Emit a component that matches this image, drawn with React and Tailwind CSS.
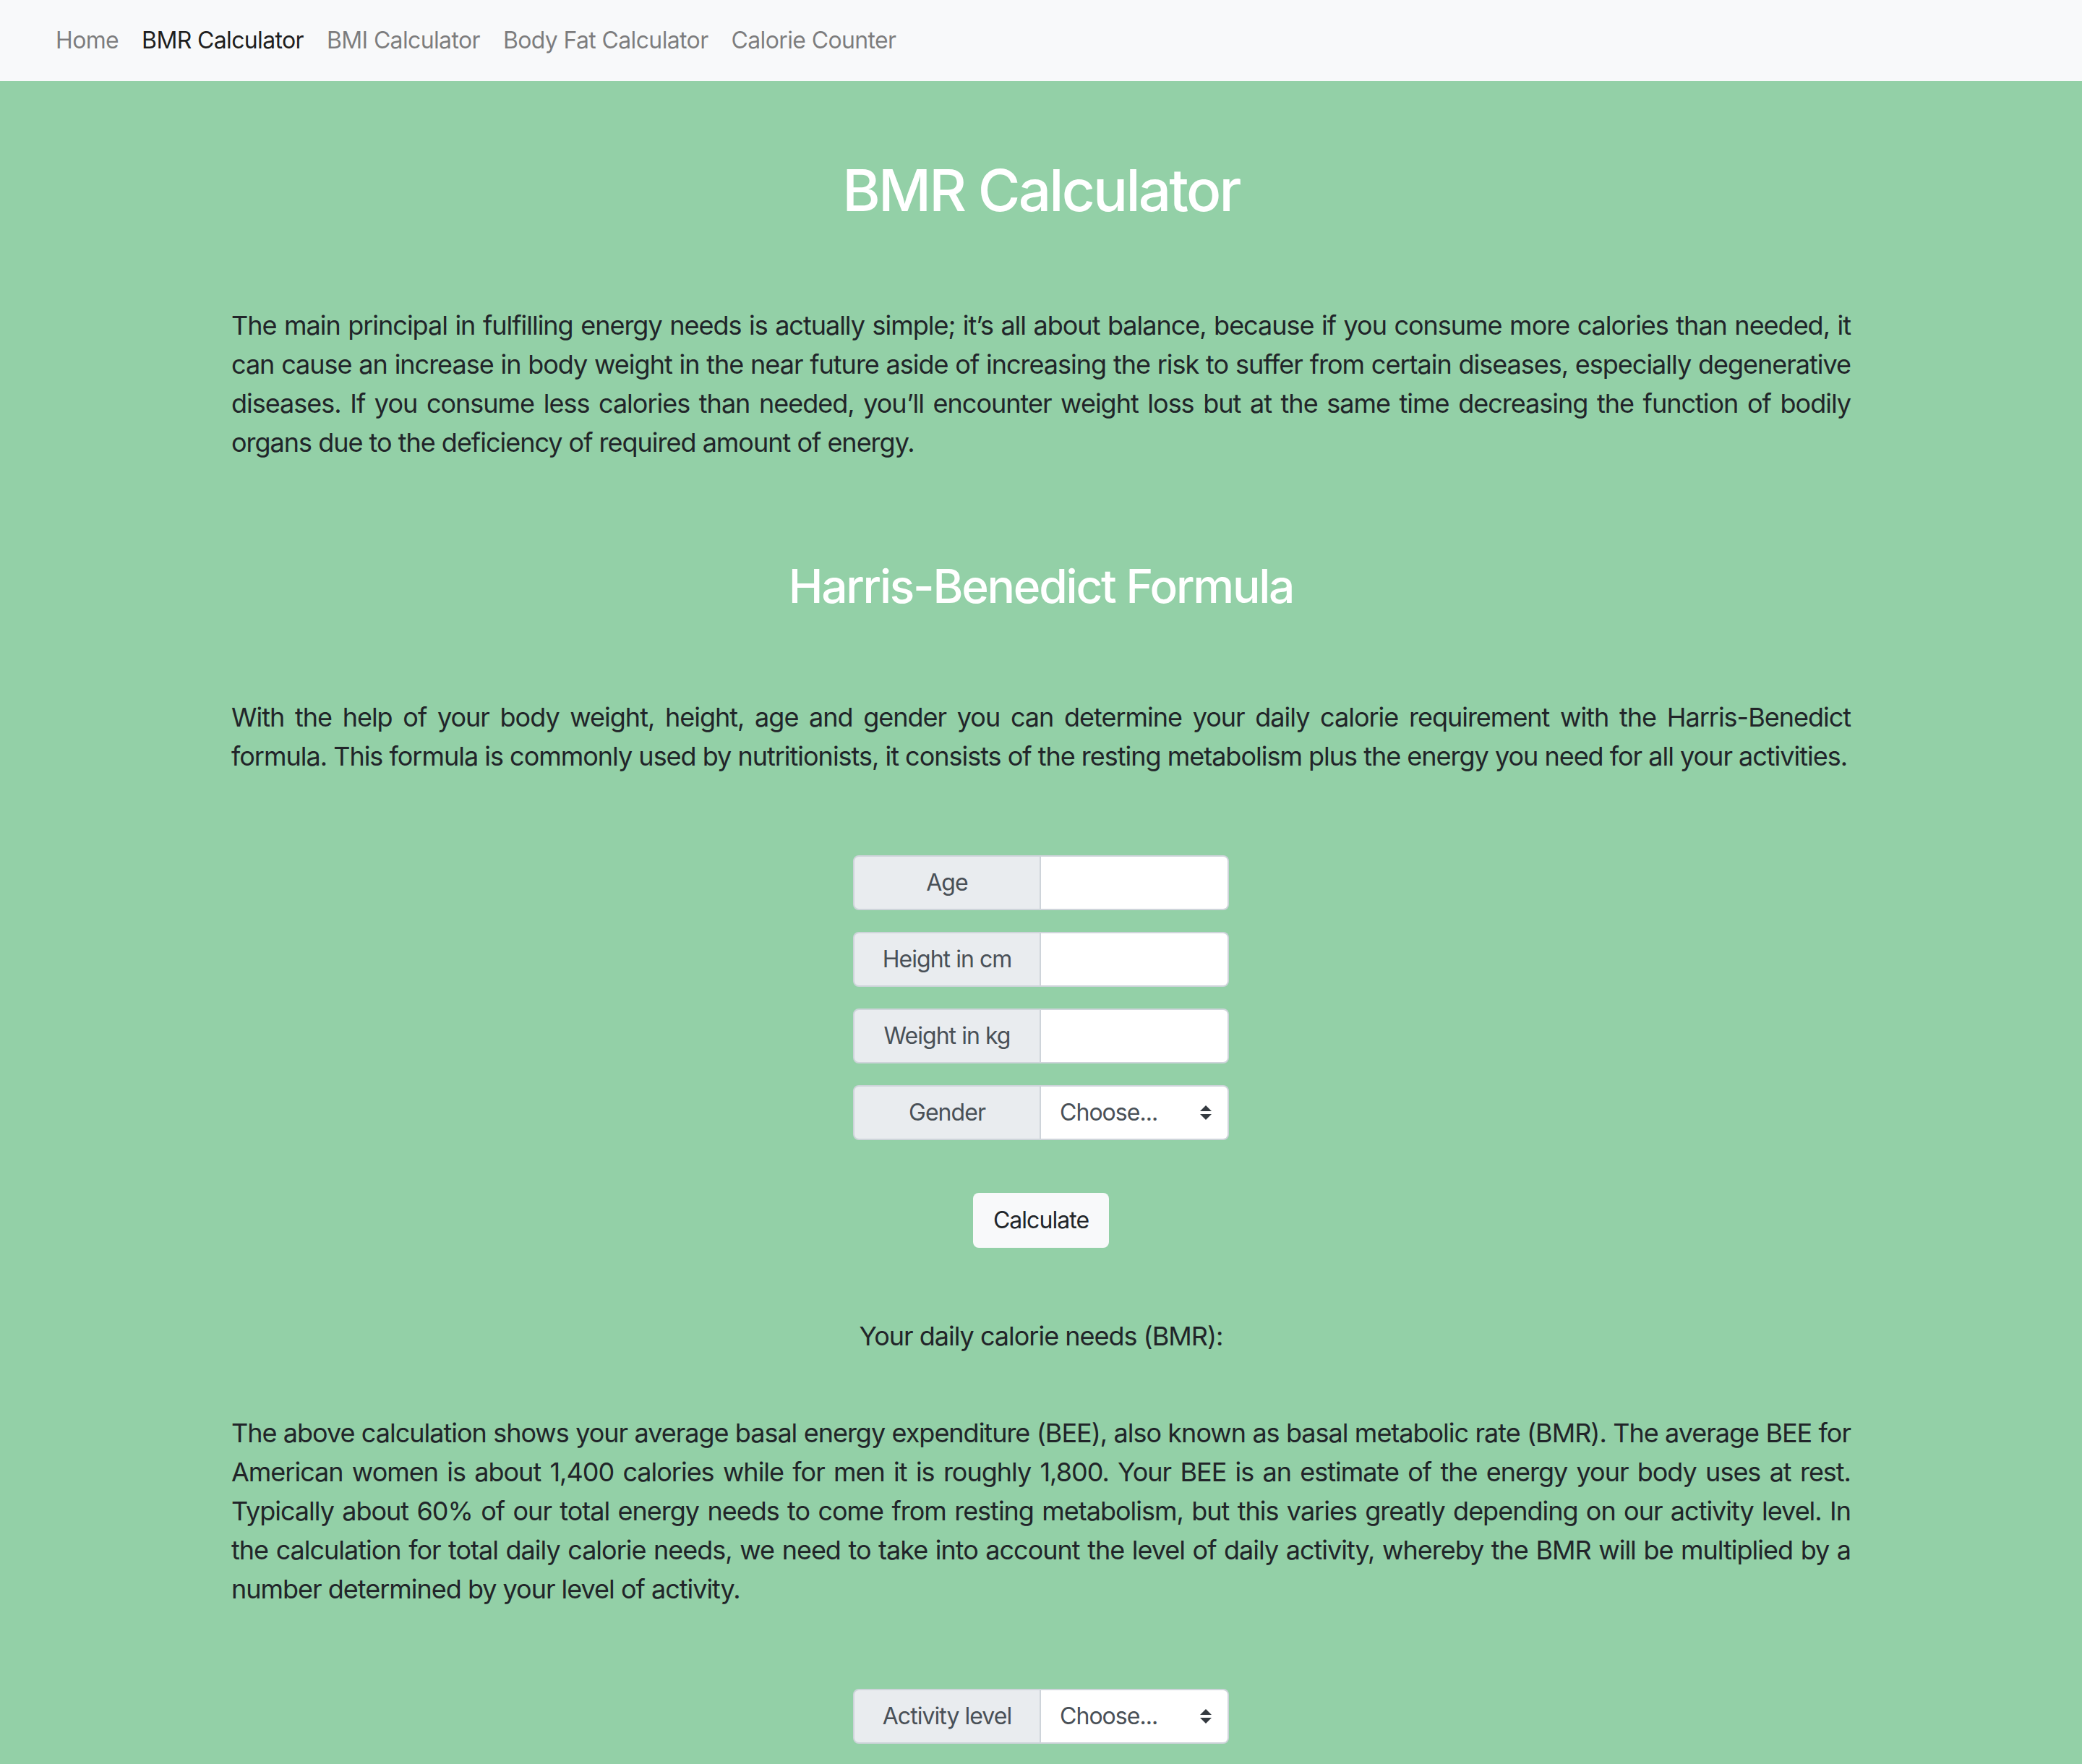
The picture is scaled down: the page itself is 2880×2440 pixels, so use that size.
import React from "react";

const FONT = { fontFamily: 'Inter, "Noto Sans", "Liberation Sans", sans-serif' };

function Arrow() {
  return (
    <svg
      className="pointer-events-none absolute right-[24px] top-1/2 -translate-y-1/2"
      width="16"
      height="20"
      viewBox="0 0 4 5"
    >
      <path fill="#343a40" d="M2 0L0 2h4zm0 5L0 3h4z" />
    </svg>
  );
}

function InputRow({ label, select }) {
  return (
    <div className="flex w-[520px] h-[76px] mx-auto">
      <div className="w-[260px] h-full flex items-center justify-center bg-[#e9ecef] border-2 border-[#ced4da] rounded-l-[8px] text-[32px] tracking-[-0.03em] text-[#495057]">
        {label}
      </div>
      {select ? (
        <div className="relative w-[260px] h-full">
          <select
            className="w-full h-full appearance-none bg-white border-2 border-l-0 border-[#ced4da] rounded-r-[8px] pl-[26px] text-[32px] tracking-[-0.03em] text-[#495057] outline-none"
            style={FONT}
            defaultValue=""
          >
            <option value="">Choose...</option>
          </select>
          <Arrow />
        </div>
      ) : (
        <input
          type="text"
          className="w-[260px] h-full bg-white border-2 border-l-0 border-[#ced4da] rounded-r-[8px] px-[24px] text-[32px] text-[#495057] outline-none"
          style={FONT}
        />
      )}
    </div>
  );
}

export default function App() {
  const links = [
    ["Home", false],
    ["BMR Calculator", true],
    ["BMI Calculator", false],
    ["Body Fat Calculator", false],
    ["Calorie Counter", false],
  ];
  return (
    <div style={FONT} className="min-h-[2440px] bg-[#93d0a7]">
      <nav className="h-[112px] bg-[#f8f9fa] flex items-center pl-[61px]">
        {links.map(([t, active]) => (
          <a
            key={t}
            className={
              active
                ? "px-[16px] text-[32px] tracking-[-0.02em] text-[rgba(0,0,0,0.9)]"
                : "px-[16px] text-[32px] tracking-[-0.02em] text-[rgba(0,0,0,0.5)]"
            }
          >
            {t}
          </a>
        ))}
      </nav>

      <main className="w-[2240px] mx-auto pb-[28px]">
        <h1 className="mt-[103px] text-center text-white text-[80px] leading-[96px] font-medium tracking-[-0.035em]">
          BMR Calculator
        </h1>

        <p className="mt-[112px] text-[36px] leading-[54px] tracking-[-0.028em] text-[#212529] text-justify">
          The main principal in fulfilling energy needs is actually simple; it’s all about balance, because if you
          consume more calories than needed, it can cause an increase in body weight in the near future aside of
          increasing the risk to suffer from certain diseases, especially degenerative diseases. If you consume less
          calories than needed, you’ll encounter weight loss but at the same time decreasing the function of bodily
          organs due to the deficiency of required amount of energy.
        </p>

        <h2 className="mt-[133px] text-center text-white text-[64px] leading-[77px] font-medium tracking-[-0.035em]">
          Harris-Benedict Formula
        </h2>

        <p className="mt-[116px] text-[36px] leading-[54px] tracking-[-0.028em] text-[#212529] text-justify">
          With the help of your body weight, height, age and gender you can determine your daily calorie requirement
          with the Harris-Benedict formula. This formula is commonly used by nutritionists, it consists of the resting
          metabolism plus the energy you need for all your activities.
        </p>

        <div className="mt-[110px] flex flex-col gap-[30px]">
          <InputRow label="Age" />
          <InputRow label="Height in cm" />
          <InputRow label="Weight in kg" />
          <InputRow label="Gender" select />
        </div>

        <div className="mt-[73px] flex justify-center">
          <button
            className="w-[188px] h-[76px] bg-[#f8f9fa] rounded-[8px] text-[32px] tracking-[-0.03em] text-[#212529]"
            style={FONT}
          >
            Calculate
          </button>
        </div>

        <p className="mt-[95px] text-center text-[36px] leading-[54px] tracking-[-0.028em] text-[#212529]">
          Your daily calorie needs (BMR):
        </p>

        <p className="mt-[80px] text-[36px] leading-[54px] tracking-[-0.028em] text-[#212529] text-justify">
          The above calculation shows your average basal energy expenditure (BEE), also known as basal metabolic rate
          (BMR). The average BEE for American women is about 1,400 calories while for men it is roughly 1,800. Your
          BEE is an estimate of the energy your body uses at rest. Typically about 60% of our total energy needs to
          come from resting metabolism, but this varies greatly depending on our activity level. In the calculation
          for total daily calorie needs, we need to take into account the level of daily activity, whereby the BMR
          will be multiplied by a number determined by your level of activity.
        </p>

        <div className="mt-[111px]">
          <InputRow label="Activity level" select />
        </div>
      </main>
    </div>
  );
}
